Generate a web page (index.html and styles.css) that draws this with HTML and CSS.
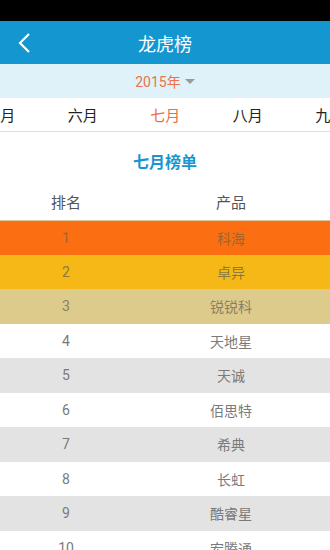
FILE: index.html
```html
<!DOCTYPE html>
<html lang="zh-CN">
<head>
    <meta charset="UTF-8">
    <title>龙虎榜</title>
    <link rel="stylesheet" href="styles.css">
</head>
<body>
<div class="statusbar"></div>
<div class="topbar">
    <span class="back">
        <svg width="14" height="22" viewBox="0 0 14 22"><path d="M12 2 L3 11 L12 20" fill="none" stroke="#fff" stroke-width="2.2"/></svg>
    </span>
    <span class="title">龙虎榜</span>
</div>
<div class="yearbar">
    <span class="year">2015年</span><span class="caret"></span>
</div>
<div class="months">
    <div class="monthlist">
        <span class="month">五月</span>
        <span class="month">六月</span>
        <span class="month on">七月</span>
        <span class="month">八月</span>
        <span class="month">九月</span>
    </div>
</div>
<div class="listtitle">七月榜单</div>
<table class="rank">
    <tr class="head">
        <td class="no">排名</td>
        <td>产品</td>
    </tr>
    <tr class="r1"><td class="no">1</td><td>科海</td></tr>
    <tr class="r2"><td class="no">2</td><td>卓异</td></tr>
    <tr class="r3"><td class="no">3</td><td>锐锐科</td></tr>
    <tr><td class="no">4</td><td>天地星</td></tr>
    <tr class="grey"><td class="no">5</td><td>天诚</td></tr>
    <tr><td class="no">6</td><td>佰思特</td></tr>
    <tr class="grey"><td class="no">7</td><td>希典</td></tr>
    <tr><td class="no">8</td><td>长虹</td></tr>
    <tr class="grey"><td class="no">9</td><td>酷睿星</td></tr>
    <tr><td class="no">10</td><td>宏腾通</td></tr>
</table>
</body>
</html>
```
FILE: styles.css
```css
* {
    padding: 0;
    margin: 0;
    box-sizing: border-box;
}
body {
    width: 330px;
    height: 550px;
    overflow: hidden;
    background: #ffffff;
    font-family: "Roboto", "Noto Sans CJK SC", sans-serif;
}
.statusbar {
    height: 21px;
    background: #000000;
}
.topbar {
    height: 43px;
    background: #1497d1;
    display: flex;
    align-items: center;
    justify-content: center;
    position: relative;
}
.back {
    position: absolute;
    left: 17px;
    top: 11px;
}
.title {
    color: #ffffff;
    font-size: 18px;
}
.yearbar {
    height: 34px;
    background: #dff2fa;
    display: flex;
    align-items: center;
    justify-content: center;
    gap: 4px;
}
.year {
    color: #ec7348;
    font-size: 14px;
}
.caret {
    width: 0;
    height: 0;
    border-left: 5px solid transparent;
    border-right: 5px solid transparent;
    border-top: 5px solid #9a9a9a;
    margin-top: 1px;
}
.months {
    height: 34px;
    border-bottom: 1px solid #dddddd;
    overflow: hidden;
    background: #ffffff;
}
.monthlist {
    display: flex;
    margin-left: -41px;
    width: 420px;
    height: 100%;
}
.month {
    flex: 0 0 82.5px;
    display: flex;
    align-items: center;
    justify-content: center;
    font-size: 15px;
    color: #222222;
}
.month.on {
    color: #ee6e42;
}
.listtitle {
    height: 55px;
    display: flex;
    align-items: center;
    justify-content: center;
    color: #1b95cf;
    font-size: 16px;
    font-weight: bold;
    padding-top: 2px;
}
.rank {
    width: 100%;
    border-collapse: collapse;
}
.rank td {
    height: 34.5px;
    text-align: center;
    font-size: 14px;
    color: #7a7a7a;
    padding: 0;
}
.rank td.no {
    width: 132px;
}
.rank .head td {
    height: 33px;
    font-size: 15px;
    color: #555555;
    border-bottom: 1px solid #d8c79c;
    vertical-align: top;
    padding-top: 4px;
}
.rank .r1 td {
    background: #fb6f12;
    color: #a0642e;
}
.rank .r2 td {
    background: #f6b816;
    color: #8b7a3a;
}
.rank .r3 td {
    background: #dccb8b;
    color: #8a8063;
}
.rank .grey td {
    background: #e3e3e3;
}
```
